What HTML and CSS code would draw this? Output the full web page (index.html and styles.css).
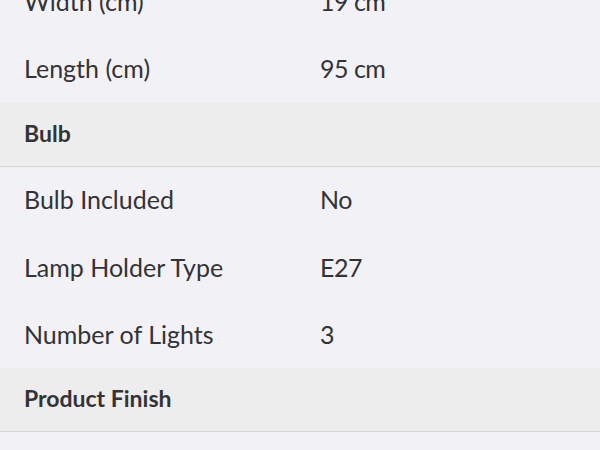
FILE: index.html
```html
<!DOCTYPE html>
<html>
<head>
<meta charset="utf-8">
<link rel="stylesheet" href="styles.css">
</head>
<body>
<div class="specs">
  <div class="row"><span class="label">Width (cm)</span><span class="value">19 cm</span></div>
  <div class="row"><span class="label">Length (cm)</span><span class="value">95 cm</span></div>
  <div class="group">Bulb</div>
  <div class="row"><span class="label">Bulb Included</span><span class="value">No</span></div>
  <div class="row"><span class="label">Lamp Holder Type</span><span class="value">E27</span></div>
  <div class="row"><span class="label">Number of Lights</span><span class="value">3</span></div>
  <div class="group">Product Finish</div>
  <div class="row"><span class="label">Main Material Finish</span><span class="value">Painted</span></div>
</div>
</body>
</html>
```
FILE: styles.css
```css
html, body {
  margin: 0;
  padding: 0;
  background: #f2f2f6;
  overflow: hidden;
}
.specs {
  margin-top: -32px;
  font-family: Lato, "Open Sans", sans-serif;
  color: #333336;
}
.row {
  box-sizing: border-box;
  display: grid;
  grid-template-columns: 296px 1fr;
  align-items: center;
  height: 67.3px;
  padding: 0 0 2px 24px;
  font-size: 25px;
  background: #f2f2f6;
}
.value {
  letter-spacing: -0.5px;
}
.group {
  box-sizing: border-box;
  display: flex;
  align-items: center;
  height: 64px;
  padding: 0 0 3px 24px;
  font-size: 23px;
  font-weight: 700;
  background: #ededed;
  border-bottom: 1px solid #d6d6da;
}
```
